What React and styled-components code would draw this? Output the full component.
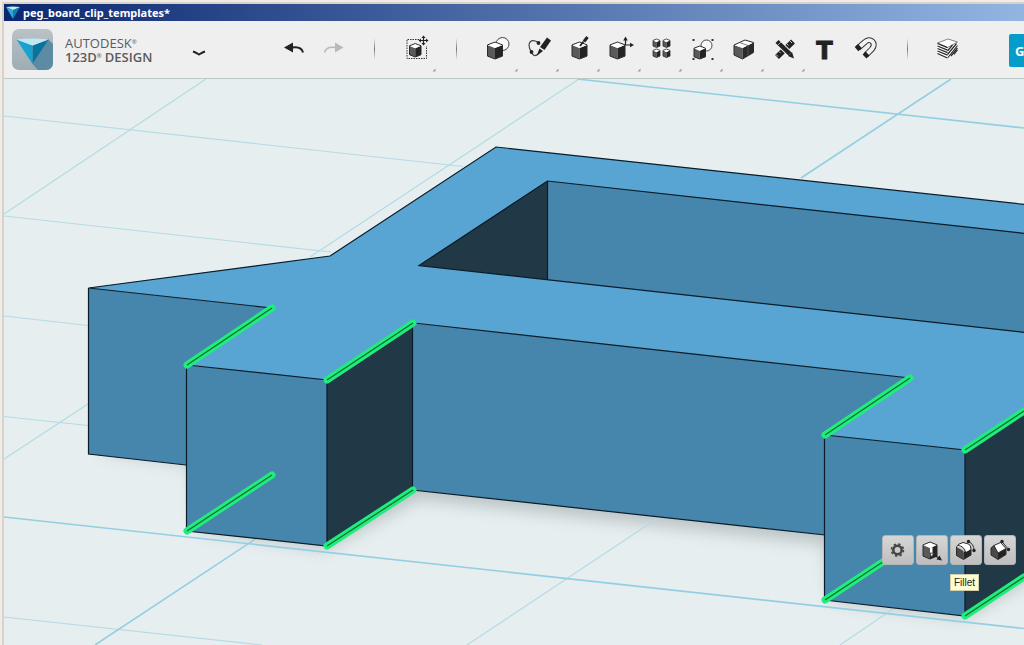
import styled, { createGlobalStyle } from "styled-components"

const GlobalStyle = createGlobalStyle`
* {
    box-sizing: border-box;
}

body {
    margin: 0;
    font-family: "Open Sans", "Noto Sans", sans-serif;
    overflow: hidden;
}
`

const WindowFrame = styled.div`
display: flex;
flex-direction: column;
height: 100vh;
padding: 4px 0 0 4px;
background: #d9d2c9;
box-shadow: inset 2px 2px 0 #efece8;
`

const TitleBar = styled.header`
display: flex;
align-items: center;
gap: 3px;
flex: none;
height: 17px;
padding-left: 2px;
background: linear-gradient(90deg, #0b2770, #93b5e2);

h1 {
    margin: 0;
    font-family: "Noto Sans", sans-serif;
    font-size: 11px;
    line-height: 17px;
    font-weight: 700;
    color: white;
}
`

const Toolbar = styled.div`
display: flex;
flex: none;
height: 58px;
background: #efefef;
border-bottom: 1px solid #bcc9c9;
overflow: hidden;
`

const Brand = styled.div`
display: flex;
align-items: center;
gap: 12px;
flex: none;
width: 174px;
padding-left: 8px;

.brand_name {
    display: flex;
    flex-direction: column;
    font-size: 13px;
    line-height: 14px;
    color: #5a5b5d;
    white-space: nowrap;
}

.brand_line {
    display: flex;
    align-items: flex-start;
    height: 14px;
}

.brand_product {
    font-weight: 600;
    gap: 3px;
}

sup {
    margin-top: 3px;
    font-size: 6px;
    line-height: 6px;
}
`

const MenuButton = styled.button`
display: flex;
align-items: center;
justify-content: center;
flex: none;
width: 41px;
height: 57px;
padding: 8px 0 0;
border: 0;
background: none;
`

const Tools = styled.div`
display: flex;
flex: none;
padding: 0 40px 0 53px;
`

const Tool = styled.button`
flex: none;
width: 41px;
height: 57px;
padding: 0;
border: 0;
background: none;
color: #222;

&:disabled {
    color: #b9b9b9;
}

svg {
    display: block;
}
`

const Separator = styled.div`
flex: none;
width: 1px;
height: 22px;
margin: 17px 20px 0;
background: linear-gradient(#efefef, #777, #efefef);
`

const PremiumButton = styled.button`
flex: 1 0 15px;
height: 33px;
margin-top: 13px;
padding: 0 0 0 6px;
border: 0;
border-radius: 2px 0 0 2px;
background: #069cc9;
color: white;
font-family: "Open Sans", sans-serif;
font-size: 13px;
font-weight: 700;
text-align: left;
overflow: hidden;
`

const Viewport = styled.main`
flex: 1;
min-height: 0;
position: relative;
overflow: hidden;
background: #e6eef0;

.scene {
    display: block;
    width: 100%;
    height: 100%;
}
`

const ContextMenu = styled.div`
position: absolute;
left: 878px;
top: 456px;
display: flex;
flex-direction: column;
align-items: flex-start;
gap: 9px;

.context_row {
    display: flex;
    gap: 2px;
}
`

const ContextButton = styled.button`
width: 32px;
height: 30px;
padding: 0;
border: 1px solid #b4b4b4;
border-radius: 3px;
background: linear-gradient(#d6d6d6, #bebebe);

svg {
    display: block;
}
`

const Tooltip = styled.div`
margin-left: 68px;
padding: 0 3px;
border: 1px solid #cfcfae;
background: #fdfcd3;
color: #222;
font-family: "Liberation Sans", sans-serif;
font-size: 10px;
line-height: 15px;
`

const points = (list) => list.map((p) => p.join(",")).join(" ")

const Cube = ({ x, y, w, h, sw = 1 }) => {
    const mid = x + w / 2
    const right = x + w
    const shoulder = y + h * 0.17
    const front = y + h * 0.36
    const low = y + h * 0.83
    return (
        <g strokeLinejoin="round">
            <polygon points={points([[x, shoulder], [mid, front], [mid, y + h], [x, low]])} fill="#5a5a5a"/>
            <polygon points={points([[right, shoulder], [mid, front], [mid, y + h], [right, low]])} fill="#242424"/>
            <polygon points={points([[x, shoulder], [mid, y], [right, shoulder], [mid, front]])} fill="white"/>
            <polygon
                points={points([[x, shoulder], [mid, y], [right, shoulder], [right, low], [mid, y + h], [x, low]])}
                fill="none" stroke="#2b2b2b" strokeWidth={sw}
            />
        </g>
    )
}

const ToolButton = ({ label, menu, disabled, children }) => {
    return (
        <Tool type="button" aria-label={label} disabled={disabled}>
            <svg width="41" height="57" viewBox="0 0 41 57">
                {children}
                {menu && <path d="M40.500 47.500v3h-3z" fill="#9a9a9a"/>}
            </svg>
        </Tool>
    )
}

const Logo = () => {
    return (
        <svg width="41" height="41" viewBox="0 0 41 41">
            <defs>
                <linearGradient id="logoBack" x1="0" y1="0" x2="0" y2="1">
                    <stop offset="0" stopColor="#b9c2c7"/>
                    <stop offset="1" stopColor="#9eacb4"/>
                </linearGradient>
                <clipPath id="logoClip"><rect width="41" height="41" rx="7"/></clipPath>
            </defs>
            <g clipPath="url(#logoClip)">
                <rect width="41" height="41" fill="url(#logoBack)"/>
                <path d="M36 10L41 15V41H26L20.500 35z" fill="#5e8ba4"/>
            </g>
            <path d="M4.500 10.500L20.500 16.500V35z" fill="#18a2cf"/>
            <path d="M36.500 10.500L20.500 16.500V35z" fill="#08749c"/>
            <path d="M4.500 10.500Q20.500 8.500 36.500 10.500L20.500 16.500z" fill="#bfe8f4"/>
        </svg>
    )
}

const Material = () => {
    return (
        <g>
            <path d="M9.500 22L19.500 26.500V37L9.500 32.500zM19.500 26.500L29.500 21V31.500L19.500 37z" fill="white"/>
            <path d="M9.500 22L20 18L29.500 21L19.500 26.500z" fill="white" stroke="#555" strokeWidth=".7"/>
            <path d="M9.500 22.500l10 4.200M9.500 25l10 4.200M9.500 27.500l10 4.200M9.500 30l10 4.200M9.500 32.500l10 4.500" stroke="#2a2a2a" strokeWidth="1.300" fill="none"/>
            <path d="M19.500 30l5-6M19.500 33.500l9-11M20 36.500l9.500-12M23 35l6.500-8M26 33.500l3.500-4.500" stroke="#2a2a2a" strokeWidth="1.200" fill="none"/>
        </g>
    )
}

const gridLines = [
    [4, 116, 463, 166.5], [4, 216, 331, 252], [4, 316, 88, 325.5],
    [4, 416.5, 88, 425.5], [4, 617, 262, 645], [4, 214, 206, 79],
    [310, 257, 579, 79], [4, 459, 88, 404], [467, 645, 658, 518],
    [840, 645, 893, 609],
]

const majorLines = [
    [4, 517, 1024, 628.5], [577, 79, 1024, 128], [801, 178, 951, 79], [95, 645, 257, 538],
]

const selectedEdges = [
    [187, 365, 272, 308], [327, 380, 413, 323], [187, 531, 272, 475], [327, 546, 413, 490],
    [825, 435, 910, 378], [965, 450, 1024, 411], [825, 600, 910, 544], [965, 616, 1024, 577],
]

const Line = ({ at }) => <line x1={at[0]} y1={at[1]} x2={at[2]} y2={at[3]}/>

const Scene = () => {
    return (
        <svg className="scene" viewBox="4 79 1020 566" preserveAspectRatio="xMinYMin slice">
            <defs>
                <filter id="soft" x="-10%" y="-20%" width="120%" height="140%">
                    <feGaussianBlur stdDeviation="8"/>
                </filter>
            </defs>
            <g fill="#6d7678" opacity=".36" filter="url(#soft)">
                <polygon points="102,452 190,464 200,530 327,549 418,499 825,544 832,600 965,618 1060,562 1060,460 110,440"/>
            </g>
            <g stroke="#b5dbe4" strokeWidth="1.200">
                {gridLines.map((at) => <Line key={at.join()} at={at}/>)}
            </g>
            <g stroke="#93cfe2" strokeWidth="1.600">
                {majorLines.map((at) => <Line key={at.join()} at={at}/>)}
            </g>

            <polygon fill="#58a5d3" points="88,288 330,256 496,147 1030,205 1030,412 965,450 825,435 910,378 414,323 327,380 187,365 272,308"/>
            <polygon fill="#4685ac" points="547,181 1030,234 1030,333 547,279.500"/>
            <polygon fill="#213846" points="547,181 547,279.500 419,265.500"/>
            <polygon fill="#4685ac" points="88,288 272,308 187,365 187,465 88,454"/>
            <polygon fill="#4685ac" points="186,365 327,380 327,546 186,531"/>
            <polygon fill="#213846" points="327,380 413,323 413,490 327,546"/>
            <polygon fill="#4685ac" points="413,323 910,378 825,435 825,535 413,490"/>
            <polygon fill="#4685ac" points="825,435 965,450 965,616 825,600"/>
            <polygon fill="#213846" points="965,450 1030,407 1030,573 965,616"/>

            <g fill="none" stroke="#0a1c28" strokeWidth="1.200">
                <path d="M272 308L88.500 288L330 256L496 147L1030 205"/>
                <path d="M1030 234L547.500 181L419 265.500L1030 333M547.500 181V279.500"/>
                <path d="M88.500 288V454L186 465M186.500 365V531L327 546V380L187 365"/>
                <path d="M412.500 323V490L825 535M414 323L910 378"/>
                <path d="M824.500 435V600L965 616V450L825 435"/>
            </g>

            <g stroke="#20ed7c" strokeWidth="7" strokeLinecap="round">
                {selectedEdges.map((at) => <Line key={at.join()} at={at}/>)}
            </g>
            <g stroke="#0b6b36" strokeWidth="1.200">
                {selectedEdges.map((at) => <Line key={at.join()} at={at}/>)}
            </g>
        </svg>
    )
}

const App = () => {
    return (
        <WindowFrame>
            <GlobalStyle/>
            <TitleBar>
                <svg width="14" height="13" viewBox="0 0 14 13">
                    <path d="M0 1L7 4V13z" fill="#29a9d6"/>
                    <path d="M14 1L7 4V13z" fill="#0f7fae"/>
                    <path d="M0 1Q7 0 14 1L7 4z" fill="#c4ecf7"/>
                </svg>
                <h1>peg_board_clip_templates*</h1>
            </TitleBar>

            <Toolbar>
                <Brand>
                    <Logo/>
                    <div className="brand_name">
                        <div className="brand_line">AUTODESK<sup>®</sup></div>
                        <div className="brand_line brand_product">
                            <div className="brand_line">123D<sup>®</sup></div>
                            <span>DESIGN</span>
                        </div>
                    </div>
                </Brand>
                <MenuButton type="button" aria-label="Menu">
                    <svg width="14" height="7" viewBox="0 0 14 7">
                        <path d="M1 1.500Q3 2 7 4.500Q11 2 13 1.500" fill="none" stroke="#222" strokeWidth="2"/>
                    </svg>
                </MenuButton>

                <Tools>
                    <ToolButton label="Undo">
                        <path d="M12 26.500L21 21.500V31.500z" fill="currentColor"/>
                        <path d="M20 26.500C26 25.500 30 27 31 31.500" fill="none" stroke="currentColor" strokeWidth="2"/>
                    </ToolButton>
                    <ToolButton label="Redo" disabled>
                        <path d="M30.500 26.500L22 21.500V31.500z" fill="currentColor"/>
                        <path d="M23 26.500C17 25.500 12.500 27 11.500 31.500" fill="none" stroke="currentColor" strokeWidth="1.500"/>
                    </ToolButton>
                    <Separator/>
                    <ToolButton label="Transform" menu>
                        <path d="M24 18.500H12V37.500H31.500V25" fill="none" stroke="#333" strokeDasharray="1.500 1"/>
                        <Cube x={14.5} y={22.500} w={11.500} h={13.500}/>
                        <path d="M28.500 15.500v8M24.500 19.500h8" stroke="#222" strokeWidth="1.200"/>
                        <path d="M28.500 14.500l2 2.500h-4zM28.500 24.500l2-2.500h-4zM23.500 19.500l2.500-2v4zM33.500 19.500l-2.500-2v4z" fill="#222"/>
                    </ToolButton>
                    <Separator/>
                    <ToolButton label="Primitives" menu>
                        <circle cx="25.500" cy="23" r="6.500" fill="#f8f8f8" stroke="#444"/>
                        <Cube x={10.5} y={21} w={15} h={17}/>
                    </ToolButton>
                    <ToolButton label="Sketch" menu>
                        <path d="M20.500 22C17 18.500 11.500 18.500 11 24C11 27 12 29 13.500 31C15 35 17 35.500 20 33" fill="none" stroke="#444" strokeWidth="1.200"/>
                        <circle cx="20.500" cy="22" r="1.900" fill="#222"/>
                        <circle cx="13.500" cy="31" r="1.900" fill="#222"/>
                        <path d="M29 16.500L33 19.500L26.500 29L22 26z" fill="#222"/>
                        <path d="M21.500 27.500L25 30L18.500 35z" fill="#222"/>
                    </ToolButton>
                    <ToolButton label="Construct" menu>
                        <Cube x={13} y={21} w={15} h={17}/>
                        <path d="M28.500 16L25 20.500" stroke="#222" strokeWidth="3"/>
                        <path d="M24.500 20.500L21 25" stroke="#222" strokeWidth="1.800"/>
                    </ToolButton>
                    <ToolButton label="Modify" menu>
                        <Cube x={10} y={21} w={15} h={17}/>
                        <path d="M25.500 19V24H31" fill="none" stroke="#222" strokeWidth="1.200"/>
                        <path d="M25.500 15.500l2.300 4h-4.600zM34 24l-4 2.300v-4.600z" fill="#222"/>
                    </ToolButton>
                    <ToolButton label="Pattern" menu>
                        <Cube x={12} y={18} w={7} h={8.500} sw={0.8}/>
                        <Cube x={22} y={18} w={7} h={8.500} sw={0.8}/>
                        <Cube x={12} y={28} w={7} h={8.500} sw={0.8}/>
                        <Cube x={22} y={28} w={7} h={8.500} sw={0.8}/>
                    </ToolButton>
                    <ToolButton label="Grouping" menu>
                        <circle cx="24.500" cy="24.500" r="5.500" fill="#f8f8f8" stroke="#444"/>
                        <Cube x={12} y={25} w={11.500} h={13}/>
                        <path d="M10.500 18h2v2h-2zM29.500 18h2v2h-2zM10.500 37h2v2h-2zM29.500 37h2v2h-2z" fill="#333"/>
                    </ToolButton>
                    <ToolButton label="Combine" menu>
                        <path d="M11 24L19.500 27V38L11 34z" fill="#5a5a5a"/>
                        <path d="M19.500 27L30.500 21.500V31.500L19.500 38z" fill="#2a2a2a"/>
                        <path d="M11 24L22 19L30.500 21.500L19.500 27z" fill="white"/>
                        <path d="M11 24L22 19L30.500 21.500V31.500L19.500 38L11 34z" fill="none" stroke="#2b2b2b" strokeLinejoin="round"/>
                        <path d="M16.500 21.500L25 24.500V35" fill="none" stroke="#555" strokeWidth=".8"/>
                    </ToolButton>
                    <ToolButton label="Measure" menu>
                        <path d="M29 20.500L13 36" stroke="#222" strokeWidth="5.500"/>
                        <path d="M26 20l2 2M23 23l1.500 1.500M15 30.500l1.500 1.500M12 33.500l2 2" stroke="#efefef" strokeWidth=".8"/>
                        <path d="M13.500 21L26 33" stroke="#efefef" strokeWidth="6.500"/>
                        <path d="M13 20.500L26 33" stroke="#222" strokeWidth="4.500"/>
                        <path d="M28 31L30 37.500L24 35z" fill="#222"/>
                        <path d="M13.500 24.500l3.500-3.500" stroke="#efefef" strokeWidth=".7"/>
                    </ToolButton>
                    <ToolButton label="Text">
                        <text x="19.500" y="38" textAnchor="middle" fontFamily="DejaVu Sans, sans-serif" fontSize="24" fontWeight="700" fill="#222" stroke="#222">T</text>
                    </ToolButton>
                    <ToolButton label="Snap">
                        <path d="M12 27L19 21C24 16 31 22 26 28L20 34" fill="none" stroke="#333" strokeWidth="6"/>
                        <path d="M12 27L19 21C24 16 31 22 26 28L20 34" fill="none" stroke="#f3f3f3" strokeWidth="4"/>
                        <path d="M10.500 28.200L14 25.200M18.500 35.500L21.500 32.500" stroke="#222" strokeWidth="5.500"/>
                    </ToolButton>
                    <Separator/>
                    <ToolButton label="Material">
                        <Material/>
                    </ToolButton>
                </Tools>
                <PremiumButton type="button">G</PremiumButton>
            </Toolbar>

            <Viewport>
                <Scene/>
                <ContextMenu>
                    <div className="context_row">
                        <ContextButton type="button" aria-label="Settings">
                            <svg width="30" height="28" viewBox="0 0 30 28">
                                <circle cx="14.500" cy="14" r="4.200" fill="none" stroke="#444" strokeWidth="2.500"/>
                                <circle cx="14.500" cy="14" r="6" fill="none" stroke="#444" strokeWidth="1.600" strokeDasharray="2.400 2.312"/>
                            </svg>
                        </ContextButton>
                        <ContextButton type="button" aria-label="Tweak">
                            <svg width="30" height="28" viewBox="0 0 30 28">
                                <Cube x={6} y={6} w={14} h={17}/>
                                <path d="M13 12L15.500 11V18L13 19.500z" fill="white"/>
                                <path d="M13 17l4.500 .5-3 3.500z" fill="white" stroke="#222" strokeWidth=".8"/>
                                <path d="M15.500 18.500L23 22.500" stroke="#222" strokeWidth="1.300"/>
                                <path d="M22.500 19.500L25 24.500L19.500 23.500z" fill="#222"/>
                            </svg>
                        </ContextButton>
                        <ContextButton type="button" aria-label="Fillet" aria-describedby="fillet-tip">
                            <svg width="30" height="28" viewBox="0 0 30 28">
                                <path d="M5.500 11L12.500 15V23.500L5.500 19.500z" fill="#4a4a4a"/>
                                <path d="M12.500 17Q13 14.500 16 15.500L20 13V19L12.500 23.500z" fill="#242424"/>
                                <path d="M5.500 11Q7 7.500 12 6.500L17.500 8Q20 9.500 20 13L14.500 16Q13.500 12 10 11z" fill="white"/>
                                <path d="M5.500 11Q7 7.500 12 6.500L17.500 8Q20 9.500 20 13V19L12.500 23.500L5.500 19.500zM7 9.500Q13 10 14.500 16" fill="none" stroke="#2b2b2b"/>
                                <path d="M17.500 5.500Q23 8 23 14.500" fill="none" stroke="#333"/>
                                <circle cx="17.500" cy="5.500" r="1.700" fill="#222"/>
                                <circle cx="23" cy="14.500" r="1.700" fill="#222"/>
                            </svg>
                        </ContextButton>
                        <ContextButton type="button" aria-label="Chamfer">
                            <svg width="30" height="28" viewBox="0 0 30 28">
                                <path d="M6 12L9 9.500L13 17V23.500L6 19z" fill="#4a4a4a"/>
                                <path d="M13 17L21 12.500V18.500L13 23.500z" fill="#242424"/>
                                <path d="M9 9.500L15.500 6.500L21 12.500L13 17z" fill="white"/>
                                <path d="M6 12L9 9.500L15.500 6.500L21 12.500V18.500L13 23.500L6 19zM9 9.500L13 17L21 12.500" fill="none" stroke="#2b2b2b" strokeLinejoin="round"/>
                                <path d="M17 5.500L23.500 13.500" stroke="#333"/>
                                <circle cx="17" cy="5.500" r="1.700" fill="#222"/>
                                <circle cx="23.500" cy="13.500" r="1.700" fill="#222"/>
                            </svg>
                        </ContextButton>
                    </div>
                    <Tooltip id="fillet-tip" role="tooltip">Fillet</Tooltip>
                </ContextMenu>
            </Viewport>
        </WindowFrame>
    )
}

export default App;
